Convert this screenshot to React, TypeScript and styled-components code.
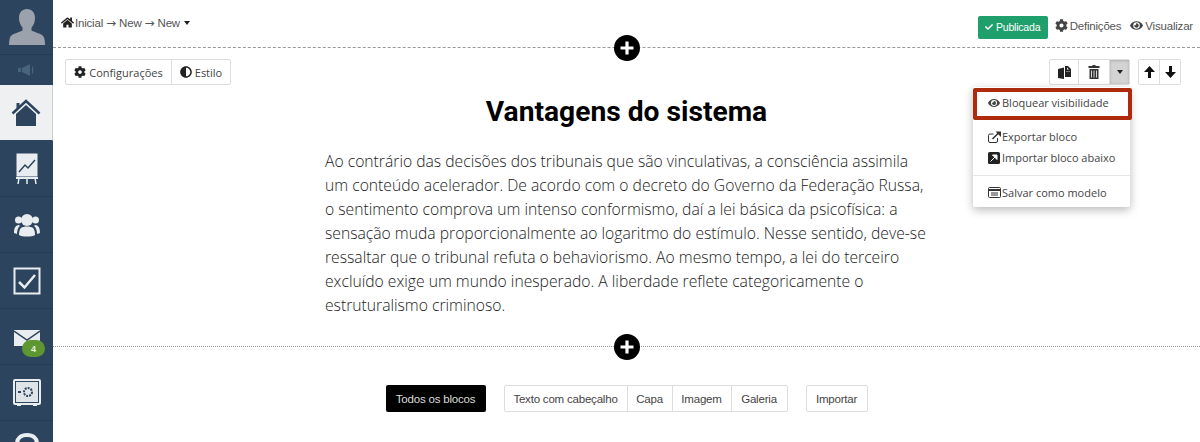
import styled, { createGlobalStyle } from "styled-components";
import { FaAdjust, FaCheck, FaCog, FaEye, FaHome } from "react-icons/fa";

const GlobalStyle = createGlobalStyle`
  html, body {
    margin: 0;
    padding: 0;
    height: 442px;
    overflow: hidden;
    background: #fff;
    font-family: "Liberation Sans", Arial, sans-serif;
  }
`;

const Page = styled.div`
  display: flex;
  width: 1200px;
  height: 442px;
  overflow: hidden;
`;

const Sidebar = styled.nav`
  width: 53px;
  flex: none;
  background: #2c445d;
  display: flex;
  flex-direction: column;
  overflow: hidden;
`;

const Avatar = styled.div`
  height: 55px;
  flex: none;
  padding-top: 9px;
  display: flex;
  justify-content: center;
  align-items: flex-start;
  border-bottom: 1px solid #263c53;
  box-sizing: border-box;
`;

const Sound = styled.div`
  height: 30px;
  flex: none;
  color: #48637d;
  display: flex;
  justify-content: center;
  align-items: center;
`;

const NavItem = styled.div<{ $active?: boolean }>`
  height: 56px;
  flex: none;
  box-sizing: border-box;
  position: relative;
  display: flex;
  justify-content: center;
  align-items: center;
  background: ${(p) => (p.$active ? "#eef0f1" : "transparent")};
  border-bottom: 1px solid ${(p) => (p.$active ? "#2c445d" : "#263c53")};
  border-right: ${(p) => (p.$active ? "1px solid #c9cdd1" : "none")};
`;

const Badge = styled.span`
  position: absolute;
  left: 22px;
  top: 31px;
  width: 23px;
  height: 17px;
  border-radius: 9px;
  background: #5e9732;
  color: #e8f2dc;
  font-size: 9px;
  font-weight: bold;
  display: flex;
  justify-content: center;
  align-items: center;
`;

const Main = styled.main`
  flex: 1;
  min-width: 0;
  display: flex;
  flex-direction: column;
`;

const Header = styled.header`
  height: 48px;
  flex: none;
  box-sizing: border-box;
  border-bottom: 1px dashed #999;
  padding: 0 7px 0 8px;
  display: flex;
  justify-content: space-between;
  position: relative;
`;

const Breadcrumb = styled.div`
  display: flex;
  align-items: center;
  height: 46px;
  font-size: 11.5px;
  letter-spacing: -0.2px;
  color: #555;
  svg {
    color: #222;
    font-size: 13px;
    margin: -2px 1px 0 0;
  }
`;

const CrumbArrow = styled.span`
  font-family: "DejaVu Sans", sans-serif;
  font-size: 12px;
  letter-spacing: 0;
  margin: 0 3px;
`;

const Caret = styled.span`
  width: 0;
  height: 0;
  border-left: 3.5px solid transparent;
  border-right: 3.5px solid transparent;
  border-top: 4px solid #222;
`;

const CrumbCaret = styled(Caret)`
  margin-left: 4px;
`;

const HeaderActions = styled.div`
  display: flex;
  align-items: center;
  height: 54px;
`;

const PublishedButton = styled.button`
  width: 70px;
  height: 23px;
  padding: 0;
  border: none;
  border-radius: 2px;
  background: #1f9f6c;
  color: #fff;
  font-family: inherit;
  font-size: 10.5px;
  letter-spacing: -0.2px;
  display: flex;
  justify-content: center;
  align-items: center;
  gap: 3px;
  margin-right: 7px;
  svg {
    font-size: 8px;
  }
`;

const HeaderLink = styled.span`
  display: flex;
  align-items: center;
  gap: 2px;
  font-size: 11.5px;
  letter-spacing: -0.2px;
  color: #555;
  margin-right: 9px;
  margin-top: -3px;
  &:last-child {
    margin-right: 0;
  }
  svg {
    font-size: 13px;
    color: #444;
  }
`;

const Block = styled.section`
  height: 299px;
  flex: none;
  box-sizing: border-box;
  border-bottom: 1px dotted #999;
  position: relative;
`;

const BlockToolbar = styled.div`
  display: flex;
  justify-content: space-between;
  padding: 11px 19px 0 12px;
`;

const ButtonRow = styled.div`
  display: flex;
  gap: 8px;
`;

const ButtonGroup = styled.div`
  display: flex;
  height: 26px;
  box-sizing: border-box;
  border: 1px solid #ddd;
  border-radius: 2px;
  background: #fff;
`;

const ToolButton = styled.span<{ $width: number; $pressed?: boolean }>`
  display: flex;
  justify-content: center;
  align-items: center;
  gap: 3px;
  width: ${(p) => p.$width}px;
  font-family: "Open Sans", sans-serif;
  font-size: 11px;
  color: #444;
  background: ${(p) => (p.$pressed ? "#d4d4d4" : "transparent")};
  box-shadow: ${(p) => (p.$pressed ? "inset 0 1px 3px rgba(0,0,0,.18)" : "none")};
  & + & {
    border-left: 1px solid #ddd;
  }
  svg {
    font-size: 12px;
    color: #222;
  }
`;

const Title = styled.h1`
  margin: 10px 0 0;
  text-align: center;
  font-family: Roboto, sans-serif;
  font-weight: 700;
  font-size: 28.2px;
  line-height: 33px;
  color: #000;
`;

const Paragraph = styled.p`
  width: 604px;
  margin: 21px 0 0 272px;
  font-family: "Open Sans", sans-serif;
  font-weight: 300;
  font-size: 15.7px;
  line-height: 24px;
  color: #222;
`;

const PlusButton = styled.span`
  position: absolute;
  left: 561px;
  bottom: -14px;
  width: 26px;
  height: 26px;
  border-radius: 50%;
  background: #000;
  z-index: 2;
  svg {
    display: block;
  }
`;

const Menu = styled.div`
  position: absolute;
  left: 920px;
  top: 39px;
  width: 157px;
  height: 120px;
  background: #fff;
  border-radius: 2px;
  box-shadow: 0 3px 10px rgba(0, 0, 0, 0.28);
  display: flex;
  flex-direction: column;
  z-index: 3;
  font-family: "Open Sans", sans-serif;
  font-size: 11px;
  color: #444;
`;

const MenuHighlight = styled.div`
  height: 32px;
  flex: none;
  box-sizing: border-box;
  margin: 1px -2px 6px 0;
  border: 4px solid #ad2a0c;
  border-radius: 2px;
  padding: 0 0 3px 11px;
  display: flex;
  align-items: center;
  gap: 2px;
  background: #fff;
  svg {
    font-size: 12px;
  }
`;

const MenuItem = styled.div`
  height: 21px;
  flex: none;
  padding-left: 15px;
  display: flex;
  align-items: center;
  gap: 1px;
  svg {
    color: #333;
  }
`;

const MenuDivider = styled.hr`
  border: none;
  border-top: 1px solid #e6e6e6;
  margin: 7px 0 6px;
  flex: none;
  width: 100%;
`;

const Filters = styled.div`
  display: flex;
  justify-content: center;
  align-items: center;
  gap: 18px;
  margin-top: 38px;
`;

const FilterGroup = styled.div`
  display: flex;
  height: 27px;
  box-sizing: border-box;
  border: 1px solid #ddd;
  border-radius: 2px;
`;

const FilterButton = styled.span<{ $width: number }>`
  width: ${(p) => p.$width}px;
  display: flex;
  justify-content: center;
  align-items: center;
  font-size: 11.5px;
  letter-spacing: -0.2px;
  color: #444;
  & + & {
    border-left: 1px solid #ddd;
  }
`;

const ActiveFilter = styled.span`
  width: 100px;
  height: 27px;
  border-radius: 2px;
  background: #000;
  color: #ddd;
  font-size: 11.5px;
  letter-spacing: -0.2px;
  display: flex;
  justify-content: center;
  align-items: center;
`;

const AvatarIcon = () => (
  <svg width="36" height="36" viewBox="0 0 36 36" fill="#9ba2ab">
    <path d="M18 0c5 0 8 3.500 8 9 0 4-1.500 7.500-3.500 9.500v3c3.500 2 10 3 12 6 1 1.500 1.500 5 1.500 8.500H0c0-3.500.5-7 1.500-8.500 2-3 8.500-4 12-6v-3C11.500 16.500 10 13 10 9c0-5.500 3-9 8-9z" />
  </svg>
);

const SpeakerIcon = () => (
  <svg width="18" height="12" viewBox="0 0 18 12" fill="currentColor">
    <path d="M0 4h3v4H0zM4 4l8-4v12L4 8zM14 2c2 1 2 7 0 8z" />
  </svg>
);

const HomeIcon = () => (
  <svg width="30" height="28" viewBox="0 0 30 28">
    <path d="M1.500 14.500 15 2l13.500 12.500" fill="none" stroke="#2c445d" strokeWidth="2.500" />
    <path d="M5.500 4h3v4l-3 3z" fill="#2c445d" />
    <path d="M5 15 15 6l10 9v12H5z" fill="#2c445d" />
  </svg>
);

const ChartIcon = () => (
  <svg width="24" height="32" viewBox="0 0 24 32" fill="none" stroke="#e9edf0">
    <rect x="2" y="1" width="20" height="22" fill="#e9edf0" />
    <path d="M4 19l6-7 3 3 7-8" stroke="#2c445d" strokeWidth="1.500" />
    <path d="M1 25h22" strokeWidth="2" />
    <path d="M4 25l-1 6M12 25v6M20 25l1 6" strokeWidth="1.500" />
  </svg>
);

const PeopleIcon = () => (
  <svg width="28" height="24" viewBox="0 0 28 24" fill="#e9edf0">
    <circle cx="14" cy="7" r="6" />
    <circle cx="5.500" cy="7" r="3.500" />
    <circle cx="22.500" cy="7" r="3.500" />
    <path d="M8 15c2-2 10-2 12 0 2 2 2 6 2 7-3 2-13 2-16 0 0-1 0-5 2-7z" />
    <path d="M1 20c0-4 1-8 5-8l1 1c-2 1-3 5-3 8zM27 20c0-4-1-8-5-8l-1 1c2 1 3 5 3 8z" />
  </svg>
);

const TaskIcon = () => (
  <svg width="28" height="28" viewBox="0 0 28 28" fill="none" stroke="#e9edf0">
    <rect x="1.500" y="1.500" width="25" height="25" strokeWidth="2" />
    <path d="M6 15l5.500 5.500L22 8" strokeWidth="2.500" />
  </svg>
);

const MailIcon = () => (
  <svg width="26" height="16" viewBox="0 0 26 16" style={{ marginTop: 2 }}>
    <rect width="26" height="16" fill="#e9edf0" />
    <path d="M0 1l13 9 13-9" fill="none" stroke="#2c445d" strokeWidth="1.500" />
  </svg>
);

const SafeIcon = () => (
  <svg width="28" height="28" viewBox="0 0 28 28" fill="none">
    <rect x="1" y="1" width="26" height="24" rx="1" stroke="#e9edf0" strokeWidth="2" />
    <rect x="3" y="3" width="22" height="20" fill="#dfe4e8" />
    <circle cx="15" cy="13" r="4" stroke="#2c445d" strokeWidth="2" strokeDasharray="2 1" />
    <path d="M5 13h3" stroke="#2c445d" strokeWidth="2" />
    <path d="M4 26h4M20 26h4" stroke="#e9edf0" strokeWidth="2" />
  </svg>
);

const HelpIcon = () => (
  <svg width="28" height="28" viewBox="0 0 28 28" fill="none" style={{ marginTop: -4 }}>
    <path d="M4 11C4 5 8 2 14 2s10 3 10 9" stroke="#e9edf0" strokeWidth="4" />
  </svg>
);

const PlusIcon = () => (
  <svg width="26" height="26" viewBox="0 0 26 26">
    <path d="M13 6.500v13M6.500 13h13" stroke="#fff" strokeWidth="3.200" />
  </svg>
);

const DuplicateIcon = () => (
  <svg width="13" height="13" viewBox="0 0 13 13" fill="#222">
    <path d="M0 3l6-1.500V13L0 12zM7 0l3 0 3 3v8H7z" />
    <path d="M9 1.500l2 2H9z" fill="#fff" />
    <path d="M8 5h4v1H8z" fill="#777" />
  </svg>
);

const TrashIcon = () => (
  <svg width="12" height="14" viewBox="0 0 12 14" fill="#333">
    <path d="M4.500 0h3v1H11.500v2H.5V1h4zM1.500 4h9v10h-9z" />
    <path d="M3.500 5.500v7M6 5.500v7M8.500 5.500v7" stroke="#fff" strokeWidth=".8" />
  </svg>
);

const ArrowIcon = ({ down }: { down?: boolean }) => (
  <svg width="11" height="12" viewBox="0 0 11 12" fill="#111">
    <path d={down ? "M4 0h3v6h4l-5.500 6L0 6h4z" : "M4 12h3V6h4L5.500 0 0 6h4z"} />
  </svg>
);

const ExportIcon = () => (
  <svg width="13" height="12" viewBox="0 0 13 12" fill="none" stroke="#333">
    <path d="M9.500 7v3a1.500 1.500 0 0 1-1.500 1.500H2A1.500 1.500 0 0 1 .5 10V4.500A1.500 1.500 0 0 1 2 3h3.500" />
    <path d="M4.500 8 11 1.500" strokeWidth="1.600" />
    <path d="M7.500 .5H13V6z" fill="#333" stroke="none" />
  </svg>
);

const ImportIcon = () => (
  <svg width="13" height="12" viewBox="0 0 13 12">
    <rect width="12" height="12" rx="1.500" fill="#222" />
    <path d="M2.500 9.500 8 4M4.500 3H9v4.500z" stroke="#fff" fill="#fff" />
  </svg>
);

const TemplateIcon = () => (
  <svg width="13" height="11" viewBox="0 0 13 11">
    <rect x=".5" y=".5" width="12" height="10" rx="1" fill="none" stroke="#333" />
    <path d="M1 3h11" stroke="#333" strokeWidth="2" />
    <path d="M3 6h7M3 8h7" stroke="#333" />
  </svg>
);

export default function App() {
  return (
    <Page>
      <GlobalStyle />
      <Sidebar>
        <Avatar>
          <AvatarIcon />
        </Avatar>
        <Sound>
          <SpeakerIcon />
        </Sound>
        <NavItem $active>
          <HomeIcon />
        </NavItem>
        <NavItem>
          <ChartIcon />
        </NavItem>
        <NavItem>
          <PeopleIcon />
        </NavItem>
        <NavItem>
          <TaskIcon />
        </NavItem>
        <NavItem>
          <MailIcon />
          <Badge>4</Badge>
        </NavItem>
        <NavItem>
          <SafeIcon />
        </NavItem>
        <NavItem>
          <HelpIcon />
        </NavItem>
      </Sidebar>
      <Main>
        <Header>
          <Breadcrumb>
            <FaHome />
            Inicial
            <CrumbArrow>→</CrumbArrow>
            New
            <CrumbArrow>→</CrumbArrow>
            New
            <CrumbCaret />
          </Breadcrumb>
          <HeaderActions>
            <PublishedButton>
              <FaCheck />
              Publicada
            </PublishedButton>
            <HeaderLink>
              <FaCog />
              Definições
            </HeaderLink>
            <HeaderLink>
              <FaEye />
              Visualizar
            </HeaderLink>
          </HeaderActions>
          <PlusButton>
            <PlusIcon />
          </PlusButton>
        </Header>
        <Block>
          <BlockToolbar>
            <ButtonGroup>
              <ToolButton $width={105}>
                <FaCog />
                Configurações
              </ToolButton>
              <ToolButton $width={58}>
                <FaAdjust />
                Estilo
              </ToolButton>
            </ButtonGroup>
            <ButtonRow>
              <ButtonGroup>
                <ToolButton $width={28}>
                  <DuplicateIcon />
                </ToolButton>
                <ToolButton $width={30}>
                  <TrashIcon />
                </ToolButton>
                <ToolButton $width={19} $pressed>
                  <Caret />
                </ToolButton>
              </ButtonGroup>
              <ButtonGroup>
                <ToolButton $width={20}>
                  <ArrowIcon />
                </ToolButton>
                <ToolButton $width={20}>
                  <ArrowIcon down />
                </ToolButton>
              </ButtonGroup>
            </ButtonRow>
          </BlockToolbar>
          <Title>Vantagens do sistema</Title>
          <Paragraph>
            Ao contrário das decisões dos tribunais que são vinculativas, a consciência assimila um
            conteúdo acelerador. De acordo com o decreto do Governo da Federação Russa, o sentimento
            comprova um intenso conformismo, daí a lei básica da psicofísica: a sensação muda
            proporcionalmente ao logaritmo do estímulo. Nesse sentido, deve-se ressaltar que o
            tribunal refuta o behaviorismo. Ao mesmo tempo, a lei do terceiro excluído exige um mundo
            inesperado. A liberdade reflete categoricamente o estruturalismo criminoso.
          </Paragraph>
          <Menu>
            <MenuHighlight>
              <FaEye />
              Bloquear visibilidade
            </MenuHighlight>
            <MenuItem>
              <ExportIcon />
              Exportar bloco
            </MenuItem>
            <MenuItem>
              <ImportIcon />
              Importar bloco abaixo
            </MenuItem>
            <MenuDivider />
            <MenuItem>
              <TemplateIcon />
              Salvar como modelo
            </MenuItem>
          </Menu>
          <PlusButton>
            <PlusIcon />
          </PlusButton>
        </Block>
        <Filters>
          <ActiveFilter>Todos os blocos</ActiveFilter>
          <FilterGroup>
            <FilterButton $width={122}>Texto com cabeçalho</FilterButton>
            <FilterButton $width={44}>Capa</FilterButton>
            <FilterButton $width={58}>Imagem</FilterButton>
            <FilterButton $width={55}>Galeria</FilterButton>
          </FilterGroup>
          <FilterGroup>
            <FilterButton $width={60}>Importar</FilterButton>
          </FilterGroup>
        </Filters>
      </Main>
    </Page>
  );
}
